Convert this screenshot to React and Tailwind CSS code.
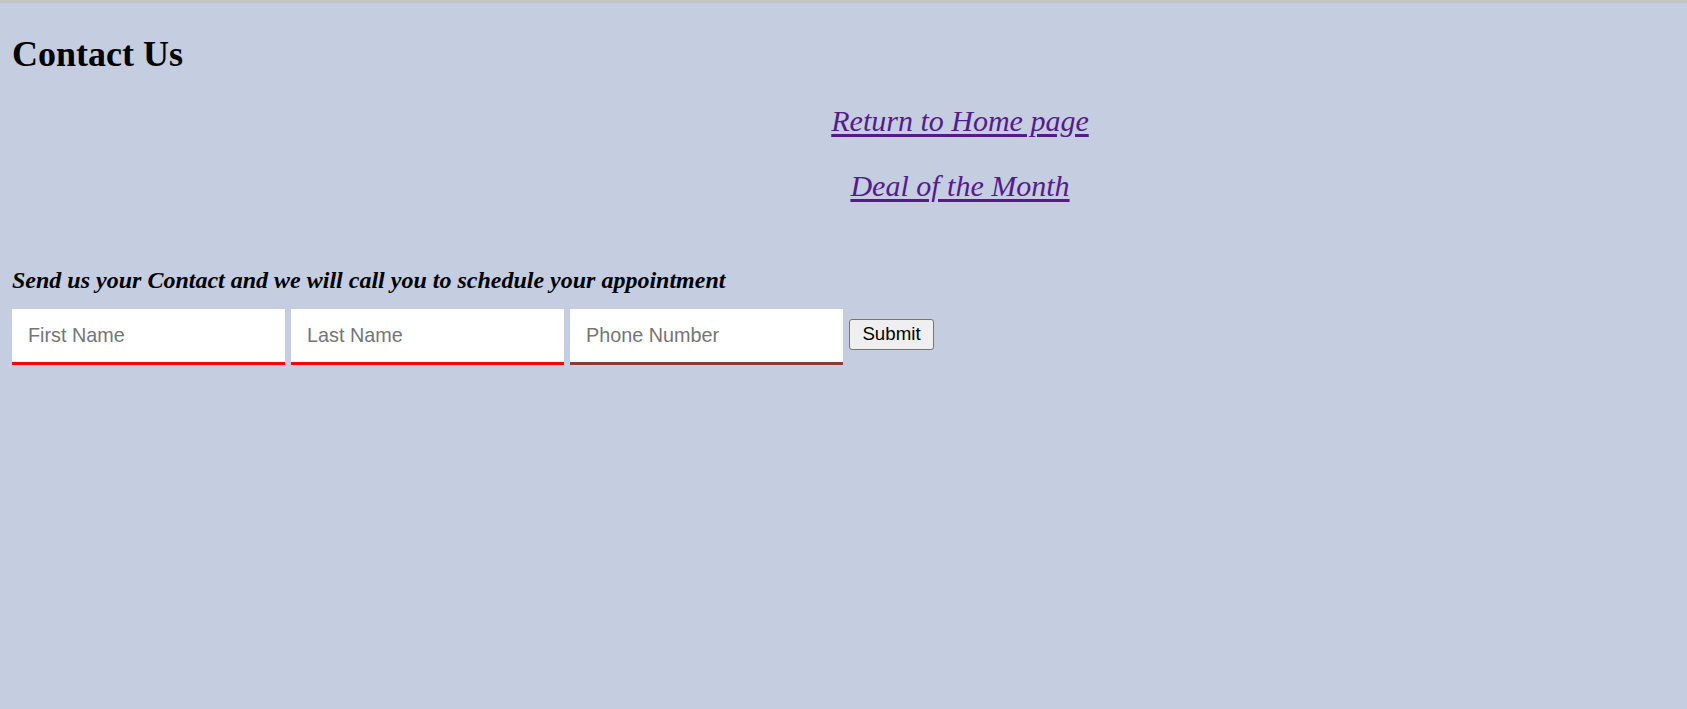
export default function App() {
  return (
    <div className="min-h-[709px] bg-[#c5cde0] border-t-[3px] border-[#c4c4c4] px-3 font-['Liberation_Serif',serif] text-black">
      <h1 className="mt-[31px] text-[36px] font-bold leading-[40px]">Contact Us</h1>
      <div className="mt-[30px] flex flex-col items-center gap-[31px] pl-[233px]">
        <a href="#" className="text-[30px] italic leading-[34px] text-[#551a8b] underline decoration-[3px] underline-offset-[3px]">
          Return to Home page
        </a>
        <a href="#" className="text-[30px] italic leading-[34px] text-[#551a8b] underline decoration-[3px] underline-offset-[3px]">
          Deal of the Month
        </a>
      </div>
      <p className="mt-[63px] text-[24px] font-bold italic leading-[28px]">
        Send us your Contact and we will call you to schedule your appointment
      </p>
      <form className="mt-[15px] flex items-start gap-[6px]" onSubmit={(e) => e.preventDefault()}>
        <input
          type="text"
          placeholder="First Name"
          className="h-[56px] w-[273px] bg-white border-b-[3px] border-[#ff0000] pl-[16px] font-['Liberation_Sans',sans-serif] text-[19.8px] placeholder:text-[#757575] outline-none"
        />
        <input
          type="text"
          placeholder="Last Name"
          className="h-[56px] w-[273px] bg-white border-b-[3px] border-[#ff0000] pl-[16px] font-['Liberation_Sans',sans-serif] text-[19.8px] placeholder:text-[#757575] outline-none"
        />
        <input
          type="text"
          placeholder="Phone Number"
          className="h-[56px] w-[273px] bg-white border-b-[3px] border-[#8b3a3a] pl-[16px] font-['Liberation_Sans',sans-serif] text-[19.8px] placeholder:text-[#757575] outline-none"
        />
        <button
          type="submit"
          className="mt-[10px] h-[31px] w-[85px] rounded-[3px] border border-[#767676] bg-[#efefef] font-['Liberation_Sans',sans-serif] text-[18.7px] leading-none text-black"
        >
          Submit
        </button>
      </form>
    </div>
  );
}
